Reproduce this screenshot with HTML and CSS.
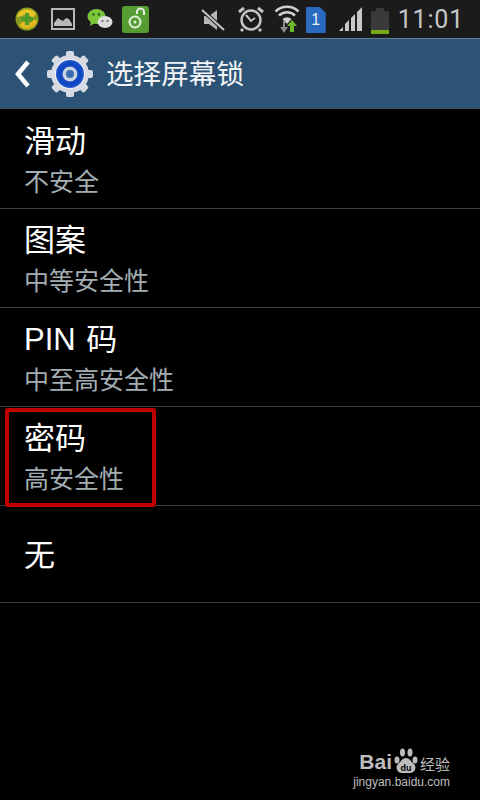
FILE: index.html
```html
<!DOCTYPE html>
<html lang="zh">
<head>
<meta charset="utf-8">
<title>选择屏幕锁</title>
<link rel="stylesheet" href="styles.css">
</head>
<body>
<div class="phone">
  <div class="status">
    <div class="status-left">
      <svg class="ic" width="24" height="24" viewBox="0 0 24 24"><circle cx="12" cy="12" r="11.500" fill="#8a9a1e"/><path d="M2 10a10 8 0 0 1 19-3l-4 4a6 5 0 0 0-10-2z" fill="#e8c62a"/><path d="M22 13a10 9 0 0 1-18 5l5-4a5 5 0 0 0 9-1z" fill="#e0b820"/><path d="M10 6h4v4h4v4h-4v4h-4v-4H6v-4h4z" fill="#4e9a2a"/></svg>
      <svg class="ic ic-pic" width="24" height="22" viewBox="0 0 24 22"><rect x="1" y="1" width="22" height="20" fill="none" stroke="#b8b8b8" stroke-width="2"/><path d="M3 18v-3l4-5 3 2 2 1 3-3 3 1 3 5v2z" fill="#b8b8b8"/></svg>
      <svg class="ic ic-chat" width="26" height="22" viewBox="0 0 26 22"><ellipse cx="9.500" cy="8.500" rx="9" ry="7.500" fill="#7cc63c"/><path d="M4 13l-1 5 5-3z" fill="#7cc63c"/><ellipse cx="18" cy="14" rx="7.500" ry="6" fill="#dcdcdc"/><circle cx="6.500" cy="6.500" r="1.200" fill="#2a5a18"/><circle cx="12" cy="6.500" r="1.200" fill="#2a5a18"/><circle cx="15.500" cy="13" r="1" fill="#555"/><circle cx="20.500" cy="13" r="1" fill="#555"/></svg>
      <svg class="ic ic-lock" width="27" height="27" viewBox="0 0 27 27"><rect width="27" height="27" rx="3" fill="#559c33"/><circle cx="13" cy="16" r="5.500" fill="none" stroke="#e4f0dc" stroke-width="2"/><path d="M15 8V6a3.500 3.500 0 0 1 7 0v3" fill="none" stroke="#e4f0dc" stroke-width="2"/><circle cx="13" cy="16" r="1.500" fill="#e4f0dc"/></svg>
    </div>
    <div class="status-right">
      <svg class="ic" width="24" height="24" viewBox="0 0 24 24"><path d="M3 8h5l8-6v20l-8-6H3z" fill="#b4b4b4"/><path d="M1 2l22 20" stroke="#1c1c1c" stroke-width="4"/><path d="M1 2l22 20" stroke="#c4c4c4" stroke-width="2"/></svg>
      <svg class="ic ic-clock" width="26" height="26" viewBox="0 0 26 26"><circle cx="13" cy="14" r="9.500" fill="none" stroke="#c4c4c4" stroke-width="2.500"/><path d="M8 9l5 6 4-3" fill="none" stroke="#c4c4c4" stroke-width="2"/><path d="M1 6l5-4 M25 6l-5-4 M5 23l-2 2 M21 23l2 2" stroke="#c4c4c4" stroke-width="3"/></svg>
      <svg class="ic ic-wifi" width="26" height="28" viewBox="0 0 26 28"><g fill="none" stroke="#cfcfcf" stroke-width="2.500"><path d="M1.500 6.500a16.500 16.500 0 0 1 23 0"/><path d="M5 10.500a11.500 11.500 0 0 1 16 0"/></g><path d="M8.500 14a7 7 0 0 1 9 0l-4.500 5z" fill="#cfcfcf"/><path d="M9 16v6H6l4 6 4-6h-3v-6z" fill="#8a8a8a"/><path d="M16 27v-6h-3l5-6 5 6h-3v6z" fill="#6cb82c"/></svg>
      <div class="sim">1</div>
      <svg class="ic ic-signal" width="24" height="24" viewBox="0 0 24 24"><path d="M0 24l4-4v4z M6 24v-7l4-4v11z M12 24V11l4-4v17z M18 24V5l5-5v24z" fill="#c8c8c8"/></svg>
      <div class="battery"><div class="battery-cap"></div><div class="battery-body"><div class="battery-level"></div></div></div>
      <span class="clock">11:01</span>
    </div>
  </div>
  <header class="bar">
    <svg class="back" width="16" height="28" viewBox="0 0 16 28"><path d="M13 2L3 14l10 12" fill="none" stroke="#fff" stroke-width="4.500"/></svg>
    <svg class="gear" width="48" height="48" viewBox="0 0 48 48">
      <g fill="#d6dae2"><circle cx="24" cy="24" r="19"/>
        <rect x="20" y="1" width="8" height="8" rx="2"/><rect x="20" y="39" width="8" height="8" rx="2"/>
        <rect x="20" y="1" width="8" height="8" rx="2" transform="rotate(45 24 24)"/><rect x="20" y="39" width="8" height="8" rx="2" transform="rotate(45 24 24)"/>
        <rect x="20" y="1" width="8" height="8" rx="2" transform="rotate(90 24 24)"/><rect x="20" y="39" width="8" height="8" rx="2" transform="rotate(90 24 24)"/>
        <rect x="20" y="1" width="8" height="8" rx="2" transform="rotate(135 24 24)"/><rect x="20" y="39" width="8" height="8" rx="2" transform="rotate(135 24 24)"/>
      </g>
      <circle cx="24" cy="24" r="15" fill="#f2f4f8"/><circle cx="24" cy="24" r="14" fill="#1e55c8"/><circle cx="24" cy="24" r="12" fill="#0f47c4"/><circle cx="24" cy="24" r="7.500" fill="#c9d2e2"/><circle cx="24" cy="24" r="4" fill="#3a6db0"/>
    </svg>
    <h1 class="title">选择屏幕锁</h1>
  </header>
  <ul class="list">
    <li class="row"><div class="name">滑动</div><div class="sub">不安全</div></li>
    <li class="row"><div class="name">图案</div><div class="sub">中等安全性</div></li>
    <li class="row"><div class="name">PIN 码</div><div class="sub">中至高安全性</div></li>
    <li class="row"><div class="name">密码</div><div class="sub">高安全性</div></li>
    <li class="row row-single"><div class="name">无</div></li>
  </ul>
  <div class="mark"></div>
  <div class="wm">
    <div class="wm-top">
      <span class="wm-bai">Bai</span>
      <svg class="wm-paw" width="24" height="26" viewBox="0 0 24 26"><g fill="#bdbdbd"><ellipse cx="3" cy="12" rx="2.500" ry="3.500"/><ellipse cx="8.500" cy="4.500" rx="2.500" ry="4"/><ellipse cx="16" cy="4.500" rx="2.500" ry="4"/><ellipse cx="21" cy="12" rx="2.500" ry="3.500"/><path d="M12 10c4 0 5 4 8 6 3 3 1 9-4 9H8c-5 0-7-6-4-9 3-2 4-6 8-6z"/></g><text x="12" y="23" text-anchor="middle" class="wm-du">du</text></svg>
      <span class="wm-cn">经验</span>
    </div>
    <div class="wm-url">jingyan.baidu.com</div>
  </div>
</div>
</body>
</html>
```
FILE: styles.css
```css
* { box-sizing: border-box; }
html, body { margin: 0; padding: 0; background: #000; }
.phone {
  position: relative;
  width: 480px;
  height: 800px;
  overflow: hidden;
  background: #000;
  font-family: "Liberation Sans", "Noto Sans CJK SC", sans-serif;
  color: #fff;
}
.status {
  height: 38px;
  background: #1b1b1b;
  display: flex;
  justify-content: space-between;
  align-items: center;
  padding: 0 16px 0 15px;
}
.status-left, .status-right { display: flex; align-items: center; }
.ic { display: block; flex: none; }
.ic-pic { margin-left: 12px; }
.ic-chat { margin-left: 12px; }
.ic-lock { margin-left: 9px; }
.ic-clock { margin-left: 13px; }
.ic-wifi { margin-left: 10px; margin-top: 0; }
.ic-signal { margin-left: 13px; margin-top: 0; }
.status-right > .ic:first-child { margin-top: 1px; }
.sim {
  width: 20px;
  height: 26px;
  margin-left: 6px;
  margin-top: 2px;
  background: #2a6ac0;
  clip-path: polygon(0 0, 70% 0, 100% 22%, 100% 100%, 0 100%);
  color: #e8eef6;
  font-size: 16px;
  line-height: 26px;
  text-align: center;
}
.battery { width: 18px; margin-left: 8px; margin-top: 3px; }
.battery-cap { width: 8px; height: 3px; margin: 0 auto; background: #3a3a3a; }
.battery-body {
  height: 23px;
  background: #3a3a3a;
  display: flex;
  align-items: flex-end;
}
.battery-level { width: 100%; height: 4px; background: #78a818; }
.clock {
  margin-left: 9px;
  font-family: Roboto, sans-serif;
  font-size: 25px;
  letter-spacing: 0.8px;
  color: #c6c6c6;
}
.bar {
  height: 71px;
  background: #2c5375;
  border-top: 1px solid #5f7d98;
  border-bottom: 1px solid #3b4d5c;
  display: flex;
  align-items: center;
  padding-left: 15px;
}
.back { flex: none; }
.gear { flex: none; margin-left: 15px; }
.title {
  margin: 0 0 4px 12px;
  font-size: 27.6px;
  font-weight: 400;
  color: #f2f4f6;
  font-family: "Noto Sans CJK SC", sans-serif;
}
.list { list-style: none; margin: 0; padding: 1px 0 0; }
.row {
  height: 99px;
  padding: 11px 0 0 24px;
  border-bottom: 1px solid #3f3f3f;
}
.row-single { height: 97px; padding-top: 29px; }
.name {
  font-size: 31px;
  line-height: 42px;
  word-spacing: 2px;
  color: #fff;
  font-family: "Liberation Sans", "Noto Sans CJK SC", sans-serif;
}
.sub {
  font-size: 25px;
  line-height: 34px;
  color: #a3aeb3;
  font-family: "Noto Sans CJK SC", sans-serif;
}
.mark {
  position: absolute;
  left: 5px;
  top: 408px;
  width: 151px;
  height: 99px;
  border: 4px solid #c00000;
  border-radius: 3px;
}
.wm {
  position: absolute;
  right: 30px;
  top: 746px;
  color: #bdbdbd;
  text-align: right;
}
.wm-top { display: flex; align-items: flex-end; justify-content: flex-end; height: 28px; }
.wm-bai { font-size: 21px; font-weight: 700; line-height: 24px; margin-right: 2px; }
.wm-cn { font-size: 15px; line-height: 20px; margin-left: 2px; font-family: "Noto Sans CJK SC", sans-serif; }
.wm-paw { flex: none; }
.wm-du { font-size: 9px; font-weight: 700; fill: #000; font-family: "Liberation Sans", sans-serif; }
.wm-url { font-size: 12px; line-height: 14px; margin-top: 1px; }
```
